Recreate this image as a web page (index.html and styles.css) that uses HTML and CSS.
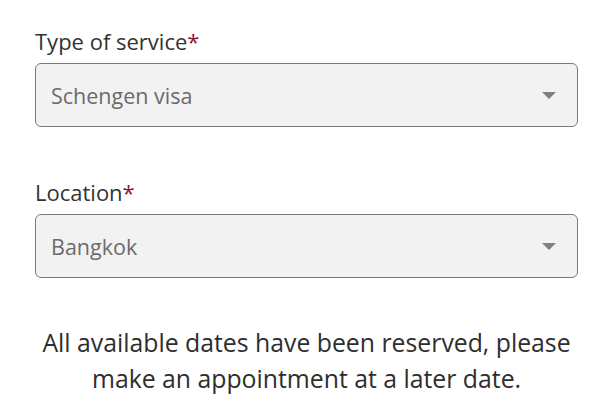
FILE: index.html
```html
<!DOCTYPE html>
<html lang="en">
<head>
<meta charset="utf-8">
<link rel="stylesheet" href="styles.css">
</head>
<body>
<div class="form">
  <div class="field">
    <label class="label">Type of service<span class="req">*</span></label>
    <div class="select">
      <span class="value">Schengen visa</span>
      <span class="caret"></span>
    </div>
  </div>
  <div class="field">
    <label class="label">Location<span class="req">*</span></label>
    <div class="select">
      <span class="value">Bangkok</span>
      <span class="caret"></span>
    </div>
  </div>
  <p class="message">All available dates have been reserved, please make an appointment at a later date.</p>
</div>
</body>
</html>
```
FILE: styles.css
```css
html, body {
  margin: 0;
  padding: 0;
  background: #ffffff;
}
body {
  font-family: "Open Sans", "Noto Sans", sans-serif;
  color: #333333;
}
.form {
  width: 543px;
  margin-left: 35px;
  padding-top: 26px;
  display: flex;
  flex-direction: column;
}
.field {
  display: flex;
  flex-direction: column;
  margin-bottom: 50px;
}
.field + .field {
  margin-bottom: 46px;
}
.label {
  font-size: 22px;
  line-height: 30px;
  margin-bottom: 7px;
}
.req {
  color: #8b1538;
}
.select {
  box-sizing: border-box;
  height: 64px;
  border: 1px solid #7a7a7a;
  border-radius: 6px;
  background: #f2f2f2;
  display: flex;
  align-items: center;
  justify-content: space-between;
  padding: 0 21px 0 15px;
}
.value {
  font-size: 21.5px;
  color: #6b6b6b;
}
.caret {
  width: 0;
  height: 0;
  border-left: 7px solid transparent;
  border-right: 7px solid transparent;
  border-top: 7px solid #808080;
}
.message {
  margin: 0;
  text-align: center;
  font-size: 24.8px;
  line-height: 36px;
  color: #2e2e2e;
}
```
